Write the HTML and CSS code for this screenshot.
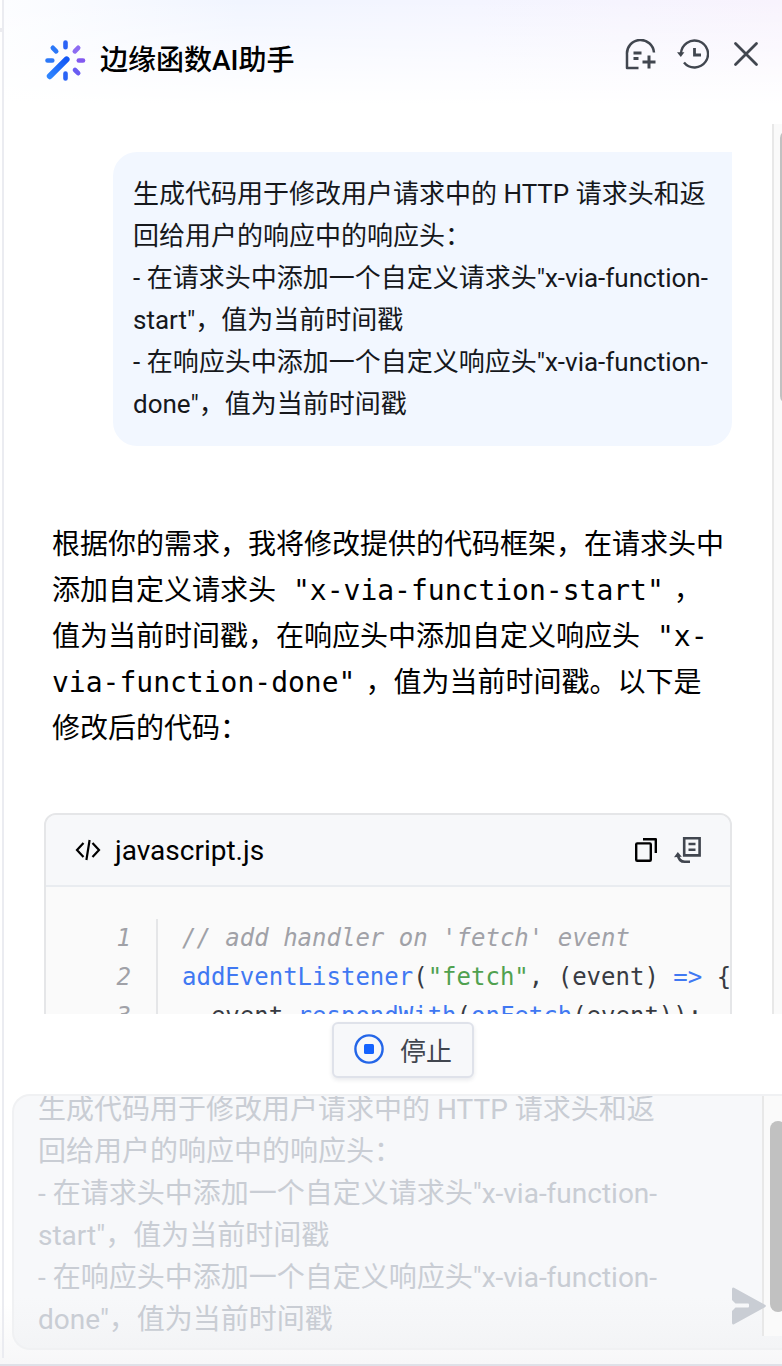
FILE: index.html
```html
<!DOCTYPE html>
<html lang="zh-CN">
<head>
<meta charset="utf-8">
<meta name="viewport" content="width=device-width, initial-scale=1">
<title>边缘函数AI助手</title>
<link rel="stylesheet" href="styles.css">
</head>
<body>
<div class="page">
  <div class="page-edge"></div>
  <main class="panel">
    <header class="header">
      <svg class="logo" viewBox="0 0 42 42" fill="none" stroke-linecap="round" stroke-width="4.6" aria-hidden="true">
        <defs>
          <linearGradient id="wand" gradientUnits="userSpaceOnUse" x1="4" y1="37" x2="22" y2="20"><stop stop-color="#2f86ff"/><stop offset="1" stop-color="#1257f5"/></linearGradient>
        </defs>
        <path d="M21.500 3.500v4.800M21.500 34.600v4.800" stroke="#2a63f6"/>
        <path d="M8.800 8.800l3.400 3.600M3.500 21.500h4.800" stroke="#2b78f8"/>
        <path d="M34.200 8.800l-3.400 3.600" stroke="#8d6cf2"/>
        <path d="M34.800 21.500H39" stroke="#8259f0"/>
        <path d="M31 31l3.200 3.200" stroke="#6a5cf2"/>
        <path d="M5.800 37.200L22.600 20.400" stroke="url(#wand)" stroke-width="6"/>
      </svg>
      <h1 class="title">边缘函数AI助手</h1>
      <div class="actions">
        <button class="icon-button" type="button" aria-label="新对话">
          <svg class="icon" viewBox="0 0 32 32" fill="none" stroke="#41464f" stroke-width="2.500" aria-hidden="true">
            <path d="M14.500 29H3V15.500a13.500 13.500 0 0 1 27-2" stroke-linejoin="round"/>
            <path d="M9.500 14h8M9.500 19.500h5" stroke-width="2.800"/>
            <path d="M25 16.500v13M18.500 23h13" stroke-width="3"/>
          </svg>
        </button>
        <button class="icon-button" type="button" aria-label="历史记录">
          <svg class="icon" viewBox="0 0 32 32" fill="none" stroke="#41464f" stroke-width="2.400" aria-hidden="true">
            <path d="M4 14.500A13.500 13.500 0 1 1 7 23.500"/>
            <path d="M0 13.200h7.400L3.800 18z" fill="#41464f" stroke="none"/>
            <path d="M17.500 9v7h6.500" stroke-width="2.800"/>
          </svg>
        </button>
        <button class="icon-button" type="button" aria-label="关闭">
          <svg class="icon" viewBox="0 0 32 32" fill="none" stroke="#41464f" stroke-width="2.800" stroke-linecap="round" aria-hidden="true">
            <path d="M5.500 4.500l21 21M26.500 4.500l-21 21"/>
          </svg>
        </button>
      </div>
    </header>

    <section class="chat">
      <div class="messages">
        <div class="bubble">生成代码用于修改用户请求中的 HTTP 请求头和返回给用户的响应中的响应头：<br>- 在请求头中添加一个自定义请求头"x-via-function-start"，值为当前时间戳<br>- 在响应头中添加一个自定义响应头"x-via-function-done"，值为当前时间戳</div>
        <p class="answer">根据你的需求，我将修改提供的代码框架，在请求头中添加自定义请求头 <code class="inline-code">"x-via-function-start"</code>，值为当前时间戳，在响应头中添加自定义响应头 <code class="inline-code">"x-via-function-done"</code>，值为当前时间戳。以下是修改后的代码：</p>
        <div class="code-card">
          <div class="code-head">
            <svg class="tag-icon" viewBox="0 0 26 24" fill="none" stroke="#000" stroke-width="2.200" aria-hidden="true">
              <path d="M8.500 5L2 12l6.500 7M17.500 5l6.500 7-6.500 7M14.600 2l-3.200 20"/>
            </svg>
            <span class="file-name">javascript.js</span>
            <button class="code-button" type="button" aria-label="复制">
              <svg class="code-icon" viewBox="0 0 28 28" fill="none" stroke="#000" stroke-width="2.400" stroke-linejoin="round" aria-hidden="true">
                <rect x="4.200" y="7.400" width="14.600" height="17.400" rx="1"/>
                <path d="M11 3.200h12.800V17"/>
              </svg>
            </button>
            <button class="code-button" type="button" aria-label="插入代码">
              <svg class="code-icon" viewBox="0 0 28 28" fill="none" stroke="#41464f" stroke-width="2.600" aria-hidden="true">
                <path d="M10.200 2.200h15.400v17.200H10.200zM14.500 8h7M14.500 13.800h7"/>
                <path d="M3.800 18.500c.6 5 3 7.300 7 7.300H16"/>
                <path d="M0 21.200l3.800-5.200 4 4.700z" fill="#41464f" stroke="none"/>
              </svg>
            </button>
          </div>
          <div class="code-body">
            <div class="gutter"><span>1</span><span>2</span><span>3</span></div>
<pre class="code"><code><span class="tok-comment">// add handler on 'fetch' event</span>
<span class="tok-fn">addEventListener</span>(<span class="tok-string">"fetch"</span>, (event) <span class="tok-fn">=&gt;</span> {
  event.<span class="tok-fn">respondWith</span>(<span class="tok-fn">onFetch</span>(event));</code></pre>
          </div>
        </div>
      </div>
      <div class="track chat-track"><div class="thumb chat-thumb"></div></div>
    </section>

    <div class="stop-row">
      <button class="stop" type="button">
        <svg class="stop-icon" viewBox="0 0 30 30" aria-hidden="true">
          <circle cx="15" cy="15" r="13.600" fill="none" stroke="#2466e8" stroke-width="2.400"/>
          <rect x="10" y="10" width="10" height="10" rx="1.500" fill="#1463ff"/>
        </svg>
        停止
      </button>
    </div>

    <form class="composer">
      <textarea class="prompt" aria-label="输入问题" disabled>生成代码用于修改用户请求中的 HTTP 请求头和返回给用户的响应中的响应头：
- 在请求头中添加一个自定义请求头"x-via-function-start"，值为当前时间戳
- 在响应头中添加一个自定义响应头"x-via-function-done"，值为当前时间戳</textarea>
      <div class="track prompt-track"><div class="thumb prompt-thumb"></div></div>
      <button class="send" type="submit" aria-label="发送" disabled>
        <svg class="send-icon" viewBox="0 0 36 38" aria-hidden="true">
          <path d="M3 .8Q1 0 1 2.200V13l3.500 3.500H17q1 0 1 1v2q0 1-1 1H4.500L1 24V35.800q0 2.200 2 1.400L34 20.200q1.800-1.200 0-2.400z" fill="#c9cdd4"/>
        </svg>
      </button>
    </form>
  </main>
</div>
</body>
</html>
```
FILE: styles.css
```css
* {
  box-sizing: border-box;
}

body {
  margin: 0;
  background: #fff;
  color: #000;
  font-family: Roboto, "Noto Sans CJK SC", sans-serif;
}

button {
  padding: 0;
  border: 0;
  background: none;
  font: inherit;
  color: inherit;
}

svg {
  display: block;
}

.page {
  display: flex;
  height: 100vh;
  border-bottom: 2px solid #dfe1e8;
  overflow: hidden;
  background: linear-gradient(to top, #f7f7f8, #fff 60px);
}

.page-edge {
  flex: none;
  width: 4px;
  margin-bottom: 6px;
  border-right: 2px solid #ebecf1;
  background: linear-gradient(#ececf0, #ececf0) 0 28px / 2px 4px no-repeat;
}

.panel {
  flex: 1;
  min-width: 0;
  display: flex;
  flex-direction: column;
}

.header {
  display: flex;
  align-items: flex-start;
  height: 124px;
  padding: 39px 20px 0 40px;
  background:
    linear-gradient(to bottom, rgba(255, 255, 255, 0), #fff 84%),
    linear-gradient(to right, #fcfdff, #f1f5ff 30%, #f4f5ff 60%, #f8f3fd);
}

.logo {
  width: 42px;
  height: 42px;
}

.title {
  margin: 0 0 0 14px;
  font-size: 28px;
  line-height: 44px;
  font-weight: 500;
}

.actions {
  display: flex;
  gap: 21px;
  margin-left: auto;
}

.icon {
  width: 32px;
  height: 32px;
}

.chat {
  flex: 1;
  min-height: 0;
  display: flex;
  overflow: hidden;
}

.messages {
  flex: 1;
  min-width: 0;
  padding: 28px 40px 0;
}

.bubble {
  margin-left: 69px;
  padding: 21px 20px;
  border-radius: 24px 0 24px 24px;
  background: #f2f7ff;
  color: #16181c;
  font-size: 26px;
  line-height: 42px;
}

.answer {
  margin: 76px 0 61px;
  padding: 0 8px;
  font-size: 28px;
  line-height: 46px;
}

.inline-code {
  padding: 0 10px;
  font-family: "DejaVu Sans Mono", monospace;
  font-size: 28px;
  line-height: 1;
}

.code-card {
  border: 2px solid #e5e6e8;
  border-radius: 12px;
  background: #fafafa;
  overflow: hidden;
}

.code-head {
  display: flex;
  align-items: center;
  height: 72px;
  padding: 0 28px 0 29px;
  border-bottom: 2px solid #e9ecf0;
  background: #f7f8fa;
}

.tag-icon {
  width: 26px;
  height: 24px;
}

.file-name {
  flex: 1;
  margin-left: 14px;
  font-size: 28px;
}

.code-button {
  margin-left: 14px;
}

.code-icon {
  width: 28px;
  height: 28px;
}

.code-body {
  display: flex;
  padding-top: 32px;
  font-family: "DejaVu Sans Mono", monospace;
  font-size: 24px;
  line-height: 39px;
}

.gutter {
  flex: none;
  display: flex;
  flex-direction: column;
  width: 112px;
  padding-right: 25px;
  border-right: 2px solid #e5e6e8;
  color: #a0a1a7;
  font-style: italic;
  text-align: right;
}

.code {
  margin: 0;
  padding-left: 24px;
  color: #383a42;
  font: inherit;
}

.code code {
  font: inherit;
}

.tok-comment {
  color: #a0a1a7;
  font-style: italic;
}

.tok-fn {
  color: #4078f2;
}

.tok-string {
  color: #50a14f;
}

.track {
  border-left: 2px solid #e8e8e8;
  background: #fafafa;
  overflow: hidden;
}

.thumb {
  width: 16px;
  margin-left: 6px;
  border-radius: 8px;
  background: #c1c1c1;
}

.chat-track {
  flex: none;
  width: 10px;
}

.chat-thumb {
  height: 274px;
  margin-top: 6px;
}

.stop-row {
  display: flex;
  justify-content: center;
  padding: 8px 0 16px 20px;
}

.stop {
  display: flex;
  align-items: center;
  gap: 16px;
  height: 56px;
  padding: 0 20px 2px;
  border: 2px solid #dfe2ea;
  border-radius: 6px;
  background: #f7f8fa;
  box-shadow: 0 2px 4px rgba(30, 40, 70, 0.1);
  color: #41464f;
  font-size: 26px;
}

.stop-icon {
  width: 30px;
  height: 30px;
}

.composer {
  position: relative;
  display: flex;
  margin: 0 0 14px 8px;
  border: 2px solid #f0f1f3;
  border-right: 0;
  border-radius: 18px 0 0 18px;
  background: linear-gradient(#f7f8fa 80%, #f3f4f6);
  overflow: hidden;
}

.prompt {
  flex: 1;
  min-width: 0;
  height: 259px;
  margin-top: -7px;
  padding: 0 94px 0 24px;
  border: 0;
  background: none;
  color: #c9cdd4;
  font: inherit;
  font-size: 28px;
  line-height: 42px;
  resize: none;
  overflow: hidden;
}

.prompt-track {
  flex: none;
  width: 20px;
  height: 240px;
}

.prompt-thumb {
  height: 191px;
  margin-top: 25px;
}

.send {
  position: absolute;
  right: 15px;
  bottom: 23px;
}

.send-icon {
  width: 36px;
  height: 38px;
}
```
